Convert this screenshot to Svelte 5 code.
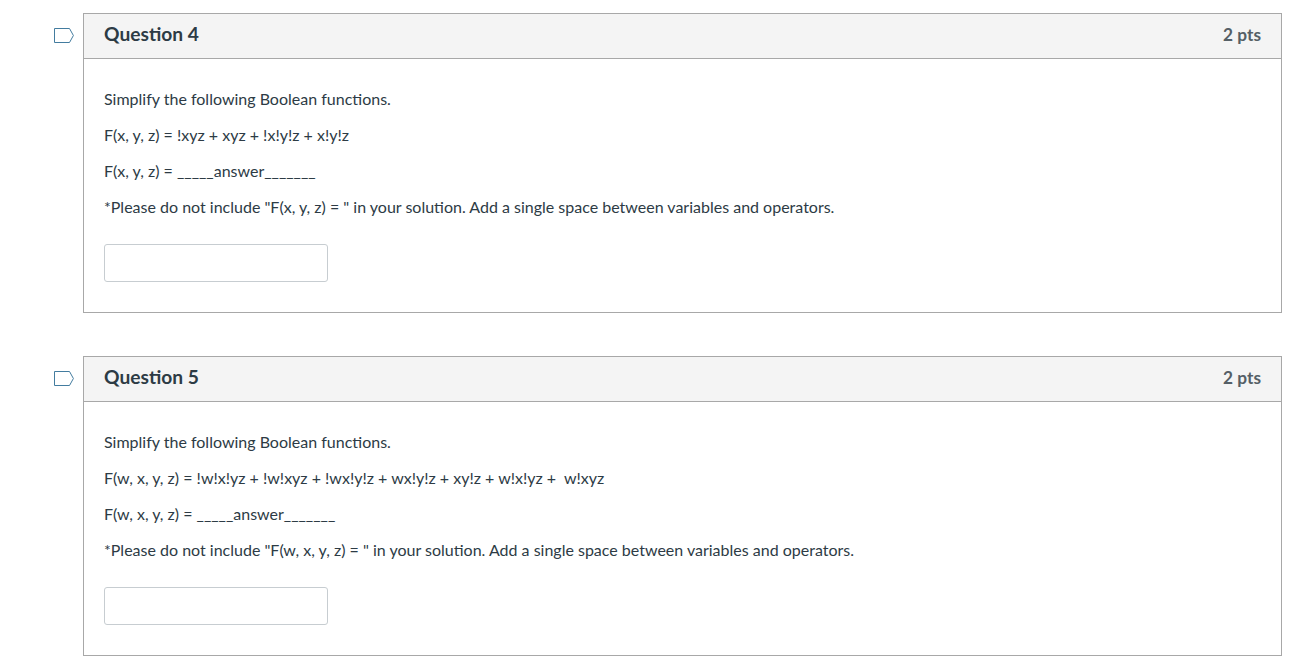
<script>
	const questions = [
		{
			title: 'Question 4',
			fn: 'F(x, y, z) = !xyz + xyz + !x!y!z + x!y!z',
			lhs: 'F(x, y, z) =',
			note: '*Please do not include "F(x, y, z) = " in your solution. Add a single space between variables and operators.'
		},
		{
			title: 'Question 5',
			fn: 'F(w, x, y, z) = !w!x!yz + !w!xyz + !wx!y!z + wx!y!z + xy!z + w!x!yz + \u00a0w!xyz',
			lhs: 'F(w, x, y, z) =',
			note: '*Please do not include "F(w, x, y, z) = " in your solution. Add a single space between variables and operators.'
		}
	];
</script>

<main class="quiz">
	{#each questions as q}
		<section class="row">
			<div class="gutter">
				<svg class="flag" width="22" height="17" viewBox="0 0 22 17" aria-hidden="true">
					<path d="M1.5 1.5H16.5L20.4 8.5L16.5 15.5H1.5Z" fill="none" stroke="#437c9f" stroke-width="1" />
				</svg>
			</div>
			<article class="card">
				<header class="head">
					<h2>{q.title}</h2>
					<span class="pts">2 pts</span>
				</header>
				<div class="body">
					<p>Simplify the following Boolean functions.</p>
					<p>{q.fn}</p>
					<p>{q.lhs} _____answer_______</p>
					<p>{q.note}</p>
					<input class="answer" type="text" aria-label="answer" />
				</div>
			</article>
		</section>
	{/each}
</main>

<style>
	:global(body) {
		margin: 0;
		background: #fff;
		font-family: Lato, "Open Sans", sans-serif;
		color: #2d3b45;
		overflow: hidden;
	}

	.quiz {
		display: flex;
		flex-direction: column;
		gap: 43px;
		padding: 13px 30px 0 0;
	}

	.row {
		display: flex;
	}

	.gutter {
		width: 83px;
		flex-shrink: 0;
		display: flex;
		justify-content: flex-end;
	}

	.flag {
		margin: 14px 8px 0 0;
	}

	.card {
		flex: 1;
		border: 1px solid #a8a8a8;
	}

	.head {
		box-sizing: border-box;
		display: flex;
		justify-content: space-between;
		align-items: center;
		height: 45px;
		padding: 0 20px 6px;
		background: #f4f4f4;
		border-bottom: 1px solid #a8a8a8;
	}

	h2 {
		margin: 0;
		font-size: 19.2px;
		font-weight: 700;
		color: #2d3b45;
	}

	.pts {
		margin-top: 2px;
		font-size: 17.3px;
		font-weight: 700;
		color: #555f66;
	}

	.body {
		display: flex;
		flex-direction: column;
		align-items: flex-start;
		padding: 30px 20px 30px;
		font-size: 16px;
		line-height: 20px;
	}

	p {
		margin: 0 0 16px;
	}

	.answer {
		box-sizing: border-box;
		width: 224px;
		height: 38px;
		margin-top: 11px;
		border: 1px solid #c7cdd1;
		border-radius: 3px;
		background: #fff;
	}
</style>
